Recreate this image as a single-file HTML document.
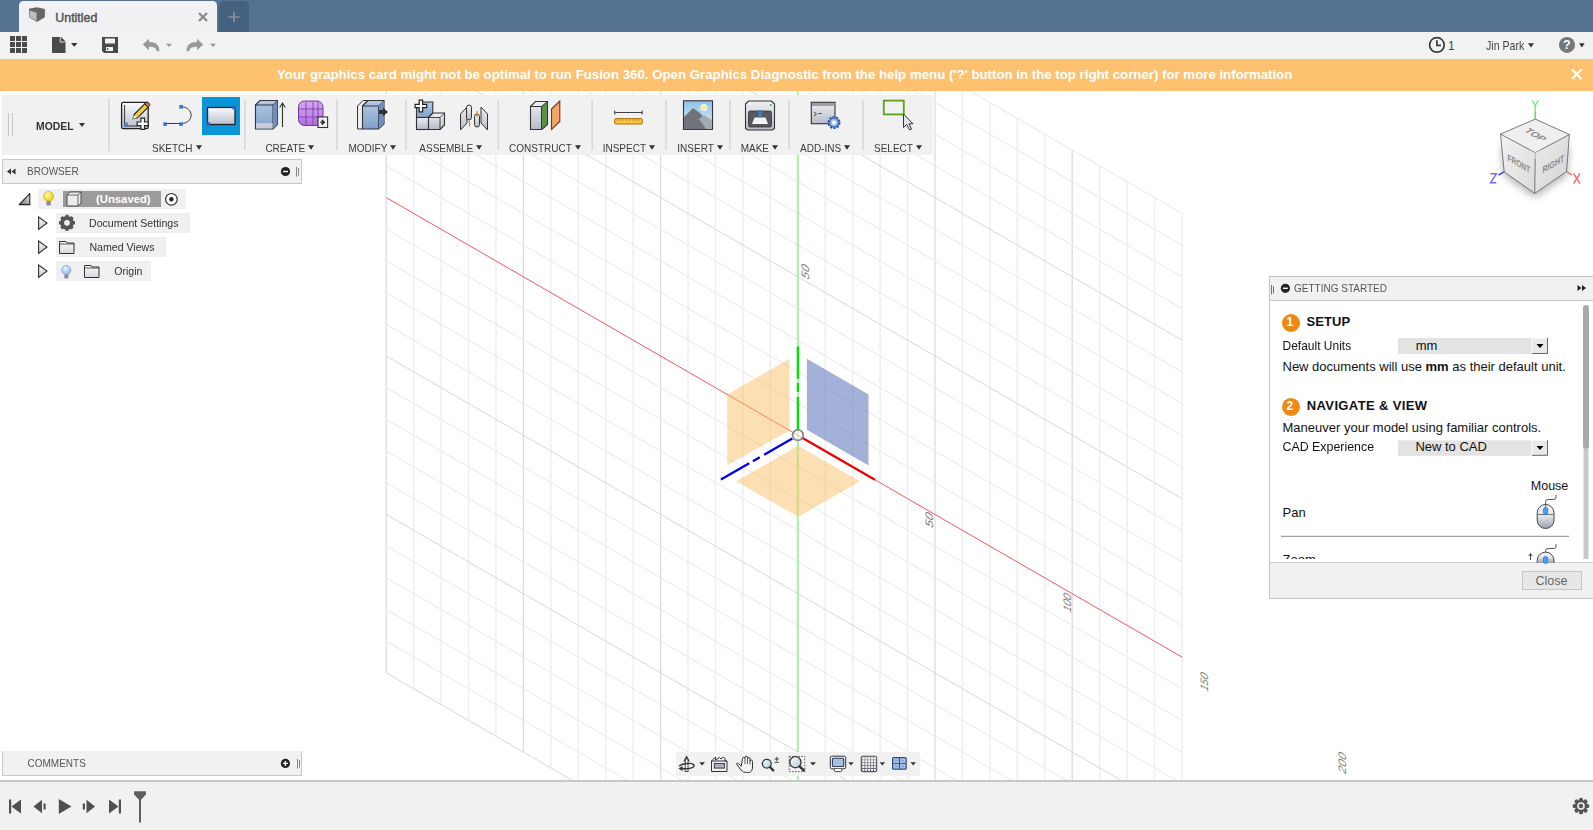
<!DOCTYPE html>
<html><head><meta charset="utf-8">
<style>
*{box-sizing:border-box;margin:0;padding:0}
html,body{width:1593px;height:830px;overflow:hidden;background:#fff;font-family:"Liberation Sans",sans-serif;position:relative}
.abs{position:absolute}
#tabbar{left:0;top:0;width:1593px;height:32px;background:#557391}
#tab{left:19px;top:1px;width:198px;height:31px;background:#f1f1f3;border-radius:4.5px 4.5px 0 0}
#tabplus{left:219px;top:1px;width:30px;height:31px;background:#45617f;border-radius:5px 5px 0 0}
#qbar{left:0;top:32px;width:1593px;height:27px;background:#f2f2f2}
#banner{left:0;top:59px;width:1593px;height:32px;background:#fdc16f;color:#fff;font-weight:bold;font-size:13.25px;line-height:32px;white-space:nowrap}
#view{left:0;top:91px;width:1593px;height:689px;overflow:hidden;background:#fff}
#timeline{left:0;top:780px;width:1593px;height:50px;background:#f1f1f1;border-top:2px solid #c8c8c8}
.tb{background:#f1f1f1}
.sep{position:absolute;width:2px;background:#dcdcdc;top:5px;height:52px}
.lbl{position:absolute;top:48px;font-size:10px;color:#3c3c3c;white-space:nowrap;line-height:12px}
.tri{display:inline-block;width:0;height:0;border-left:3px solid transparent;border-right:3px solid transparent;border-top:4px solid #333;vertical-align:2px;margin-left:3px}
.lbl2{position:absolute;top:0;font-size:10px;color:#3a3a3a;white-space:nowrap;line-height:14px;transform:scaleY(1.08);transform-origin:0 0}
.lbl2 .tri{border-top-color:#333}
.tree{font-size:10.6px;color:#333;line-height:14px;margin-top:-1px;white-space:nowrap;transform:scaleY(1.1);transform-origin:0 0}
.gs{font-size:13px;color:#111;line-height:15px;white-space:nowrap}
</style></head><body>

<div id="tabbar" class="abs"></div>
<div id="tab" class="abs"></div>
<div id="tabplus" class="abs"></div>
<svg class="abs" style="left:0;top:0" width="260" height="32">
 <path d="M29,8.8 L36.9,7.2 L44.9,9.1 L44.9,17.3 L36.9,22 L29.2,17.3 Z" fill="#666"/>
 <path d="M29.6,10.4 L36.6,12.8 L36.6,21 L29.6,16.9 Z" fill="#bdbdbd"/>
 <path d="M199,13 L207,21 M207,13 L199,21" stroke="#8a8a8a" stroke-width="2.3"/>
 <path d="M234,11.5 V22.5 M228.5,17 H239.5" stroke="#8e9098" stroke-width="1.6"/>
</svg>
<div class="abs" style="left:55.3px;top:10.6px;font-size:12.4px;color:#555;line-height:15px;-webkit-text-stroke:0.45px #555">Untitled</div>
<div id="qbar" class="abs"></div>
<svg class="abs" style="left:0;top:32px" width="240" height="27">
 <g fill="#4a4a4a">
  <rect x="10" y="4" width="5" height="5"/><rect x="16" y="4" width="5" height="5"/><rect x="22" y="4" width="5" height="5"/>
  <rect x="10" y="10" width="5" height="5"/><rect x="16" y="10" width="5" height="5"/><rect x="22" y="10" width="5" height="5"/>
  <rect x="10" y="16" width="5" height="5"/><rect x="16" y="16" width="5" height="5"/><rect x="22" y="16" width="5" height="5"/>
 </g>
 <path d="M52,5 H60 L65.5,10.5 V21 H52 Z" fill="#4a4a4a"/><path d="M60.8,4.8 L65.8,9.8 H60.8 Z" fill="#4a4a4a"/><path d="M60.2,5.6 V10 H64.8" fill="none" stroke="#f2f2f2" stroke-width="0.9"/>
 <path d="M71,11 H77.5 L74.25,14.8 Z" fill="#333"/>
 <path d="M102,5 H118 V21 H104 L102,19 Z" fill="#4a4a4a"/>
 <rect x="105" y="6.5" width="10" height="5" fill="#f2f2f2"/>
 <rect x="106" y="15" width="7" height="4" fill="#f2f2f2"/><rect x="107" y="16" width="1.2" height="2" fill="#4a4a4a"/>
 <path d="M142.8,12.5 L149,6.8 V10 C155.5,9.8 159.6,12.5 159.3,19.2 L156.8,19.2 C156.3,16 153.5,14.8 149,14.8 V18.2 Z" fill="#999"/>
 <path d="M166,11.8 H172 L169,15 Z" fill="#999"/>
 <path d="M203.2,12.5 L197,6.8 V10 C190.5,9.8 186.4,12.5 186.7,19.2 L189.2,19.2 C189.7,16 192.5,14.8 197,14.8 V18.2 Z" fill="#999"/>
 <path d="M210,11.8 H216 L213,15 Z" fill="#999"/>
</svg>
<svg class="abs" style="left:1420px;top:32px" width="173" height="27">
 <circle cx="16.9" cy="12.9" r="7.3" fill="none" stroke="#3a3a3a" stroke-width="1.7"/>
 <path d="M16.9,8.3 V13.4 H21" fill="none" stroke="#3a3a3a" stroke-width="1.7"/>
 <path d="M108,11.2 H114 L111,15.5 Z" fill="#333"/>
 <circle cx="147" cy="12.9" r="8" fill="#777"/>
 <path d="M159,11.2 H164.7 L161.85,15.5 Z" fill="#333"/>
</svg>
<div class="abs" style="left:1448px;top:39px;font-size:12px;color:#444;line-height:14px">1</div>
<div class="abs" style="left:1486px;top:37px;font-size:10.6px;color:#444;line-height:14px;transform:scaleY(1.15);transform-origin:0 0">Jin Park</div>
<div class="abs" style="left:1563px;top:38px;font-size:12.5px;font-weight:bold;color:#fff;line-height:15px">?</div>
<div id="banner" class="abs"><span class="abs" style="left:277px;top:0">Your graphics card might not be optimal to run Fusion 360. Open Graphics Diagnostic from the help menu ('?' button in the top right corner) for more information</span>
<svg class="abs" style="left:1570px;top:9px" width="14" height="14"><path d="M2,1.5 L11.5,11 M11.5,1.5 L2,11" stroke="#fff" stroke-width="2.2"/></svg></div>
<div id="view" class="abs">
<svg class="abs" style="left:0;top:-91px" width="1593" height="871" viewBox="0 0 1593 871">
<g stroke-width="1">
<line x1="386.20" y1="-246.03" x2="386.20" y2="672.84" stroke="#dcdcdc" stroke-width="1.3"/>
<line x1="413.64" y1="-230.18" x2="413.64" y2="688.68" stroke="#efefef" stroke-width="1.5"/>
<line x1="441.08" y1="-214.34" x2="441.08" y2="704.52" stroke="#efefef" stroke-width="1.5"/>
<line x1="468.52" y1="-198.50" x2="468.52" y2="720.36" stroke="#efefef" stroke-width="1.5"/>
<line x1="495.96" y1="-182.66" x2="495.96" y2="736.21" stroke="#efefef" stroke-width="1.5"/>
<line x1="523.40" y1="-166.81" x2="523.40" y2="752.05" stroke="#dcdcdc" stroke-width="1.3"/>
<line x1="550.84" y1="-150.97" x2="550.84" y2="767.89" stroke="#efefef" stroke-width="1.5"/>
<line x1="578.28" y1="-135.13" x2="578.28" y2="783.73" stroke="#efefef" stroke-width="1.5"/>
<line x1="605.72" y1="-119.29" x2="605.72" y2="799.58" stroke="#efefef" stroke-width="1.5"/>
<line x1="633.16" y1="-103.44" x2="633.16" y2="815.42" stroke="#efefef" stroke-width="1.5"/>
<line x1="660.60" y1="-87.60" x2="660.60" y2="831.26" stroke="#dcdcdc" stroke-width="1.3"/>
<line x1="688.04" y1="-71.76" x2="688.04" y2="847.10" stroke="#efefef" stroke-width="1.5"/>
<line x1="715.48" y1="-55.92" x2="715.48" y2="862.95" stroke="#efefef" stroke-width="1.5"/>
<line x1="742.92" y1="-40.07" x2="742.92" y2="878.79" stroke="#efefef" stroke-width="1.5"/>
<line x1="770.36" y1="-24.23" x2="770.36" y2="894.63" stroke="#efefef" stroke-width="1.5"/>
<line x1="825.24" y1="7.45" x2="825.24" y2="926.32" stroke="#efefef" stroke-width="1.5"/>
<line x1="852.68" y1="23.30" x2="852.68" y2="942.16" stroke="#efefef" stroke-width="1.5"/>
<line x1="880.12" y1="39.14" x2="880.12" y2="958.00" stroke="#efefef" stroke-width="1.5"/>
<line x1="907.56" y1="54.98" x2="907.56" y2="973.84" stroke="#efefef" stroke-width="1.5"/>
<line x1="935.00" y1="70.82" x2="935.00" y2="989.69" stroke="#dcdcdc" stroke-width="1.3"/>
<line x1="962.44" y1="86.67" x2="962.44" y2="1005.53" stroke="#efefef" stroke-width="1.5"/>
<line x1="989.88" y1="102.51" x2="989.88" y2="1021.37" stroke="#efefef" stroke-width="1.5"/>
<line x1="1017.32" y1="118.35" x2="1017.32" y2="1037.21" stroke="#efefef" stroke-width="1.5"/>
<line x1="1044.76" y1="134.19" x2="1044.76" y2="1053.06" stroke="#efefef" stroke-width="1.5"/>
<line x1="1072.20" y1="150.04" x2="1072.20" y2="1068.90" stroke="#dcdcdc" stroke-width="1.3"/>
<line x1="1099.64" y1="165.88" x2="1099.64" y2="1084.74" stroke="#efefef" stroke-width="1.5"/>
<line x1="1127.08" y1="181.72" x2="1127.08" y2="1100.58" stroke="#efefef" stroke-width="1.5"/>
<line x1="1154.52" y1="197.56" x2="1154.52" y2="1116.43" stroke="#efefef" stroke-width="1.5"/>
<line x1="1181.96" y1="213.41" x2="1181.96" y2="1132.27" stroke="#efefef" stroke-width="1.5"/>
<line x1="386.20" y1="-246.03" x2="1181.96" y2="213.41" stroke="#e8e8e8"/>
<line x1="386.20" y1="-214.34" x2="1181.96" y2="245.09" stroke="#e8e8e8"/>
<line x1="386.20" y1="-182.66" x2="1181.96" y2="276.78" stroke="#e8e8e8"/>
<line x1="386.20" y1="-150.97" x2="1181.96" y2="308.46" stroke="#e8e8e8"/>
<line x1="386.20" y1="-119.29" x2="1181.96" y2="340.15" stroke="#d8d8d8"/>
<line x1="386.20" y1="-87.60" x2="1181.96" y2="371.83" stroke="#e8e8e8"/>
<line x1="386.20" y1="-55.92" x2="1181.96" y2="403.52" stroke="#e8e8e8"/>
<line x1="386.20" y1="-24.23" x2="1181.96" y2="435.20" stroke="#e8e8e8"/>
<line x1="386.20" y1="7.45" x2="1181.96" y2="466.88" stroke="#e8e8e8"/>
<line x1="386.20" y1="39.14" x2="1181.96" y2="498.57" stroke="#d8d8d8"/>
<line x1="386.20" y1="70.82" x2="1181.96" y2="530.25" stroke="#e8e8e8"/>
<line x1="386.20" y1="102.51" x2="1181.96" y2="561.94" stroke="#e8e8e8"/>
<line x1="386.20" y1="134.19" x2="1181.96" y2="593.62" stroke="#e8e8e8"/>
<line x1="386.20" y1="165.88" x2="1181.96" y2="625.31" stroke="#e8e8e8"/>
<line x1="386.20" y1="229.25" x2="1181.96" y2="688.68" stroke="#e8e8e8"/>
<line x1="386.20" y1="260.93" x2="1181.96" y2="720.36" stroke="#e8e8e8"/>
<line x1="386.20" y1="292.62" x2="1181.96" y2="752.05" stroke="#e8e8e8"/>
<line x1="386.20" y1="324.30" x2="1181.96" y2="783.73" stroke="#e8e8e8"/>
<line x1="386.20" y1="355.99" x2="1181.96" y2="815.42" stroke="#d8d8d8"/>
<line x1="386.20" y1="387.67" x2="1181.96" y2="847.10" stroke="#e8e8e8"/>
<line x1="386.20" y1="419.36" x2="1181.96" y2="878.79" stroke="#e8e8e8"/>
<line x1="386.20" y1="451.04" x2="1181.96" y2="910.47" stroke="#e8e8e8"/>
<line x1="386.20" y1="482.73" x2="1181.96" y2="942.16" stroke="#e8e8e8"/>
<line x1="386.20" y1="514.41" x2="1181.96" y2="973.84" stroke="#d8d8d8"/>
<line x1="386.20" y1="546.10" x2="1181.96" y2="1005.53" stroke="#e8e8e8"/>
<line x1="386.20" y1="577.78" x2="1181.96" y2="1037.21" stroke="#e8e8e8"/>
<line x1="386.20" y1="609.47" x2="1181.96" y2="1068.90" stroke="#e8e8e8"/>
<line x1="386.20" y1="641.15" x2="1181.96" y2="1100.58" stroke="#e8e8e8"/>
<line x1="386.20" y1="672.84" x2="1181.96" y2="1132.27" stroke="#d8d8d8"/>


</g>
<g>
 <line x1="797.8" y1="0" x2="797.8" y2="871" stroke="#a6f29e" stroke-width="2"/>
 <line x1="386.4" y1="197.7" x2="1182.4" y2="657.3" stroke="#f25a5a" stroke-width="1"/>
 <path d="M789.5,358.8 L727.2,394.5 V465.5 L789.5,430.5 Z" fill="#f9bf60" fill-opacity="0.48"/>
 <path d="M806.9,358.8 L868.5,394.5 V465.5 L806.9,429.8 Z" fill="#6077bb" fill-opacity="0.58"/>
 <path d="M798.2,445.8 L735.9,481.3 L798.2,516.8 L860,481.3 Z" fill="#f9bf60" fill-opacity="0.48"/>
 <line x1="797.9" y1="346.4" x2="797.9" y2="429.5" stroke="#00e000" stroke-width="2.3" stroke-dasharray="32.3 4.4 8.9 5 40"/>
 <line x1="802.6" y1="438" x2="874.9" y2="479.7" stroke="#f00000" stroke-width="2.3"/>
 <line x1="792.4" y1="438.5" x2="720.9" y2="479.6" stroke="#0000ee" stroke-width="2.3" stroke-dasharray="32.6 5 8 4.2 40"/>
 <circle cx="797.9" cy="435.1" r="5.3" fill="#fff" fill-opacity="0.5" stroke="#8a8a8a" stroke-width="1.8"/>
 <g font-family="Liberation Sans" font-size="12.5" fill="#7a7a7a">
  <text transform="matrix(0,-1,0.866,0.5,809.2,280.6)" textLength="14" lengthAdjust="spacingAndGlyphs">50</text>
  <text transform="matrix(0,-1,0.866,0.5,933.1,529)" textLength="14.6" lengthAdjust="spacingAndGlyphs">50</text>
  <text transform="matrix(0,-1,0.866,0.5,1070.5,613.5)" textLength="17.9" lengthAdjust="spacingAndGlyphs">100</text>
  <text transform="matrix(0,-1,0.866,0.5,1208.2,692.6)" textLength="17.9" lengthAdjust="spacingAndGlyphs">150</text>
  <text transform="matrix(0,-1,0.866,0.5,1345.5,775)" textLength="20.5" lengthAdjust="spacingAndGlyphs">200</text>
 </g>
</g>
</svg>
</div>

<div id="toolbar" class="abs" style="left:2px;top:95px;width:931px;height:60px;background:#f1f1f1"></div>
<svg class="abs" style="left:0;top:90px" width="940" height="70">
 <defs>
  <linearGradient id="gPaper" x1="0" y1="0" x2="0" y2="1"><stop offset="0" stop-color="#fbfcfe"/><stop offset="1" stop-color="#b9bfcc"/></linearGradient>
  <linearGradient id="gBlue" x1="0" y1="0" x2="0" y2="1"><stop offset="0" stop-color="#b5cbe6"/><stop offset="1" stop-color="#7f9fcb"/></linearGradient>
  <linearGradient id="gGray" x1="0" y1="0" x2="0" y2="1"><stop offset="0" stop-color="#eef0f4"/><stop offset="1" stop-color="#b6bcc8"/></linearGradient>
  <linearGradient id="gSky" x1="0" y1="0" x2="0" y2="1"><stop offset="0" stop-color="#8fc0e8"/><stop offset="1" stop-color="#e6f2fb"/></linearGradient>
  <linearGradient id="gPurple" x1="0" y1="0" x2="0" y2="1"><stop offset="0" stop-color="#d9a8f2"/><stop offset="1" stop-color="#b56ee0"/></linearGradient>
 </defs>
 <!-- grip -->
 <path d="M8.5,23 V46 M12.5,23 V46" stroke="#c6c6c6" stroke-width="1"/>
 <path d="M79,33 H85 L82,37 Z" fill="#333"/>
 <!-- separators -->
 <g stroke="#d8d8d8" stroke-width="1.6">
  <path d="M109,8 V61"/><path d="M244.8,10 V60"/><path d="M336.8,10 V60"/><path d="M405.9,10 V60"/><path d="M498.3,10 V60"/>
  <path d="M592.2,10 V60"/><path d="M666,10 V60"/><path d="M729.8,10 V60"/><path d="M789.2,10 V60"/><path d="M862.9,10 V60"/>
 </g>
 <!-- sketch create -->
 <rect x="121.6" y="12.3" width="26.6" height="26.4" rx="1.6" fill="url(#gPaper)" stroke="#222" stroke-width="1.3"/>
 <path d="M124.6,15 V36 H137" fill="none" stroke="#333" stroke-width="1"/>
 <rect x="124.6" y="33" width="3" height="3" fill="#5c9cf0" stroke="#2a5cc0" stroke-width="0.6"/>
 <path d="M134.2,24.5 L144.8,13.9 L148.1,17.2 L137.5,27.8 L133.2,28.8 Z" fill="#f8cf2e" stroke="#222" stroke-width="1.1"/>
 <path d="M133.9,25.2 L136.8,28.1 L133.2,28.8 Z" fill="#fff"/>
 <path d="M144.8,13.9 L146.3,12.4 Q147.2,11.6 148.1,12.4 L149.6,13.9 Q150.4,14.8 149.6,15.7 L148.1,17.2 Z" fill="#c97a3a" stroke="#222" stroke-width="0.9"/>
 <path d="M140.9,28.2 h3.6 v3.8 h3.8 v3.6 h-3.8 v3.8 h-3.6 v-3.8 h-3.8 v-3.6 h3.8 Z" fill="#fff" stroke="#222" stroke-width="1.2"/>
 <!-- line arc -->
 <path d="M165,33.5 H181 M181,16.8 C194.5,16.8 194.5,33.5 181,33.5" fill="none" stroke="#3a3a3a" stroke-width="1"/>
 <rect x="163.3" y="32.3" width="3.6" height="3.6" fill="#3b6fd8"/><rect x="179.3" y="32.3" width="3.6" height="3.6" fill="#3b6fd8"/><rect x="179.3" y="15" width="3.6" height="3.6" fill="#3b6fd8"/>
 <!-- rectangle selected -->
 <rect x="202" y="7" width="38" height="38" fill="#0996d6"/>
 <rect x="207.5" y="17.5" width="27.5" height="17" fill="url(#gPaper)" stroke="#222" stroke-width="1.3"/>
 <rect x="232.5" y="16" width="3.6" height="3.6" fill="#2f5fd6"/><rect x="206.5" y="32.3" width="3.6" height="3.6" fill="#2f5fd6"/>
 <!-- extrude -->
 <path d="M255.5,15 L260,10.5 H277.5 V34.5 L273,39 H255.5 Z" fill="url(#gBlue)" stroke="#333" stroke-width="1.1"/>
 <path d="M255.5,15 H273 L277.5,10.5 M273,15 V39" fill="none" stroke="#333" stroke-width="1"/>
 <path d="M273.2,15.2 L277.3,11 V34.5 L273.2,38.8 Z" fill="#6f8fbf"/>
 <rect x="256" y="33" width="16.6" height="5.5" fill="#c7ccd6"/>
 <path d="M282.5,37 V14 M279.7,17.5 L282.5,13 L285.3,17.5" fill="none" stroke="#333" stroke-width="1.1"/>
 <!-- form -->
 <rect x="298.5" y="11" width="24.5" height="24.5" rx="6" fill="url(#gPurple)" stroke="#6b3a9a" stroke-width="1"/>
 <g stroke="#7a44a8" stroke-width="0.9" fill="none"><path d="M299,19 H323 M299,27 H323 M306,12 V35 M313,12 V35 M318,12 V35"/></g>
 <rect x="318" y="27" width="9.6" height="10.5" fill="#f4f4f4" stroke="#333" stroke-width="1.1"/>
 <path d="M320,32.3 H323.5 M322,29.8 L325,32.3 L322,34.8 Z" fill="#333" stroke="#333" stroke-width="1"/>
 <!-- modify press pull -->
 <path d="M357.5,16 L363,10.5 H368 L362.5,16 V39 H357.5 Z" fill="#eceef2" stroke="#333" stroke-width="1"/>
 <path d="M362.5,16 L368,10.5 H384 V34 L378.5,39 H362.5 Z" fill="url(#gBlue)" stroke="#333" stroke-width="1.1"/>
 <path d="M362.5,16 H378.5 L384,10.5 M378.5,16 V39" fill="none" stroke="#333" stroke-width="1"/>
 <path d="M378.7,16.2 L383.8,11 V34 L378.7,38.8 Z" fill="#6f8fbf"/>
 <path d="M379,20 H383 V17.5 L388,22 L383,26.5 V24 H379 Z" fill="#333"/>
 <!-- assemble new comp -->
 <path d="M416.5,17.5 L421,12 H432.8 V23 L428.5,27.5 H416.5 Z" fill="url(#gBlue)" stroke="#333" stroke-width="1.1"/>
 <rect x="416.5" y="27.5" width="12" height="12" fill="url(#gGray)" stroke="#333" stroke-width="1.1"/>
 <path d="M428.5,27.5 L433,23 H444.5 V35 L440,39.5 H428.5 Z" fill="url(#gGray)" stroke="#333" stroke-width="1.1"/>
 <path d="M428.5,27.5 H440 L444.5,23 M440,27.5 V39.5" fill="none" stroke="#333" stroke-width="0.9"/>
 <path d="M419.2,10.2 h3.4 v4.1 h4.1 v3.4 h-4.1 v4.1 h-3.4 v-4.1 h-4.1 v-3.4 h4.1 Z" fill="#fff" stroke="#222" stroke-width="1.2"/>
 <!-- joint -->
 <path d="M460.5,24 L467,17 V33 L460.5,40 Z" fill="url(#gGray)" stroke="#333" stroke-width="1"/>
 <rect x="466.5" y="15" width="5" height="15" rx="2.5" fill="url(#gGray)" stroke="#333" stroke-width="1"/>
 <path d="M487.5,24 L481,17 V33 L487.5,40 Z" fill="url(#gGray)" stroke="#333" stroke-width="1"/>
 <rect x="474.5" y="24" width="5" height="13" rx="2.5" fill="url(#gGray)" stroke="#333" stroke-width="1"/>
 <path d="M469.5,31 V36.5 M477,21 V27" stroke="#f07a10" stroke-width="1.2"/>
 <!-- construct -->
 <path d="M530.5,16.5 L535.5,11.5 H547.5 V34.5 L541.5,39.5 H530.5 Z" fill="url(#gGray)" stroke="#333" stroke-width="1.1"/>
 <path d="M541.5,16.5 L547.5,11.5 V34.5 L541.5,39.5 Z" fill="#5c8f47" stroke="#333" stroke-width="1"/>
 <path d="M530.5,16.5 H541.5" stroke="#333" stroke-width="1"/>
 <path d="M551.5,19 L559.8,11 V31.5 L551.5,39.5 Z" fill="#f0a56a" stroke="#7a3a10" stroke-width="1.1"/>
 <!-- inspect -->
 <path d="M614.7,20.5 V24.5 M614.7,22.5 H642.2 M642.2,20.5 V24.5" fill="none" stroke="#444" stroke-width="1.1"/>
 <rect x="614.7" y="28.6" width="27.6" height="5.4" rx="1" fill="#f3c640" stroke="#b07010" stroke-width="1"/>
 <path d="M617.5,29 v2 M620.5,29 v2 M623.5,29 v2 M626.5,29 v2 M629.5,29 v2 M632.5,29 v2 M635.5,29 v2 M638.5,29 v2" stroke="#a06a10" stroke-width="0.6"/>
 <!-- insert -->
 <rect x="683.5" y="10.8" width="29" height="28.6" fill="url(#gSky)" stroke="#333" stroke-width="1.1"/>
 <circle cx="703.9" cy="17.5" r="3.2" fill="#f8ec9a" stroke="#fff" stroke-width="0.8"/>
 <path d="M684,39 V27 L693,18 L700,23 L712,36 V39 Z" fill="#6f747c"/>
 <path d="M699,29 L704,25 L712,30 V39 H706 Z" fill="#a3aab3"/>
 <!-- make -->
 <path d="M745.5,14 L748.5,11 H771.5 L774.5,14 V38.5 L772.5,40 H747.5 L745.5,38.5 Z" fill="url(#gGray)" stroke="#333" stroke-width="1.1"/>
 <rect x="748.5" y="21" width="23" height="16" rx="1.5" fill="#55595f" stroke="#333" stroke-width="0.8"/>
 <path d="M752,34 L754.5,27.5 H765.5 L768,34 Z" fill="#f2f2f2"/>
 <path d="M758.5,20 H761.5 V26 L760,28 L758.5,26 Z" fill="#3f7fd8"/>
 <rect x="770" y="14.2" width="1.6" height="1.6" fill="#1aa31a"/>
 <!-- add-ins -->
 <rect x="811.3" y="12.3" width="23.7" height="21.4" fill="url(#gGray)" stroke="#333" stroke-width="1.1"/>
 <rect x="812" y="13" width="22.4" height="3" fill="#9aa0aa"/>
 <path d="M814,22 L816.5,24 L814,26 M818.5,23.5 H821.5" fill="none" stroke="#333" stroke-width="0.9"/>
 <g transform="translate(834,32.6)"><circle r="5.8" fill="#8fb1e4" stroke="#2a4f9a" stroke-width="1.4" stroke-dasharray="2.2 1.4"/><circle r="4.5" fill="#9dbbe8" stroke="#2a4f9a" stroke-width="1"/><circle r="2" fill="#fff"/></g>
 <!-- select -->
 <rect x="883.8" y="10.6" width="20" height="13.8" fill="none" stroke="#5ea01a" stroke-width="1.8"/>
 <path d="M903.5,24 V37.5 L906.6,34.5 L909.6,40 L911.6,39 L908.9,33.8 L913,33.8 Z" fill="#dfe3ea" stroke="#333" stroke-width="1"/>
</svg>
<div class="abs" style="left:36px;top:119px;font-size:10.4px;font-weight:bold;color:#333;line-height:14px;transform:scaleY(1.12);transform-origin:0 0">MODEL</div>
<div class="abs lblrow" style="left:0;top:141px;width:940px;height:16px">
 <span class="lbl2" style="left:152px">SKETCH<i class="tri"></i></span>
 <span class="lbl2" style="left:265.4px">CREATE<i class="tri"></i></span>
 <span class="lbl2" style="left:348.5px">MODIFY<i class="tri"></i></span>
 <span class="lbl2" style="left:419.3px">ASSEMBLE<i class="tri"></i></span>
 <span class="lbl2" style="left:509px">CONSTRUCT<i class="tri"></i></span>
 <span class="lbl2" style="left:602.7px">INSPECT<i class="tri"></i></span>
 <span class="lbl2" style="left:677.3px">INSERT<i class="tri"></i></span>
 <span class="lbl2" style="left:740.7px">MAKE<i class="tri"></i></span>
 <span class="lbl2" style="left:800px">ADD-INS<i class="tri"></i></span>
 <span class="lbl2" style="left:874px">SELECT<i class="tri"></i></span>
</div>


<!-- browser -->
<div class="abs" style="left:2px;top:159px;width:300px;height:25px;background:#f1f1f1;border:1px solid #c9c9c9"></div>
<svg class="abs" style="left:0;top:159px" width="310" height="25">
 <path d="M7,12.5 L11,9.5 V15.5 Z M11.5,12.5 L15.5,9.5 V15.5 Z" fill="#333"/>
 <circle cx="285.5" cy="12.5" r="4.6" fill="#222"/><path d="M283,12.5 H288" stroke="#fff" stroke-width="1.4"/>
 <path d="M296.5,8 V17.5 M298.5,9 V16.5" stroke="#777" stroke-width="0.9"/>
</svg>
<div class="abs" style="left:27px;top:164px;font-size:10px;color:#555;line-height:14px;transform:scaleY(1.08);transform-origin:0 0">BROWSER</div>
<!-- tree -->
<div class="abs" style="left:38px;top:189px;width:148px;height:20px;background:#f0f0f0"></div>
<div class="abs" style="left:63px;top:191px;width:98px;height:16px;background:#9b9b9b"></div>
<div class="abs" style="left:56px;top:213px;width:134px;height:20px;background:#f0f0f0"></div>
<div class="abs" style="left:56px;top:237px;width:110px;height:20px;background:#f0f0f0"></div>
<div class="abs" style="left:56px;top:261px;width:95px;height:20px;background:#f0f0f0"></div>
<svg class="abs" style="left:0;top:185px" width="200" height="100">
 <defs>
  <radialGradient id="gBulbY" cx="0.4" cy="0.35" r="0.7"><stop offset="0" stop-color="#fff9b0"/><stop offset="1" stop-color="#e8c800"/></radialGradient>
  <radialGradient id="gBulbB" cx="0.4" cy="0.35" r="0.7"><stop offset="0" stop-color="#e8f2ff"/><stop offset="1" stop-color="#8ab0e8"/></radialGradient>
  <linearGradient id="gFold" x1="0" y1="0" x2="0" y2="1"><stop offset="0" stop-color="#fafafa"/><stop offset="1" stop-color="#d6d9de"/></linearGradient>
 </defs>
 <defs><linearGradient id="gExp" x1="1" y1="0" x2="0" y2="1"><stop offset="0" stop-color="#f4f4f4"/><stop offset="1" stop-color="#6a6a6a"/></linearGradient></defs>
 <path d="M19.2,19.6 L29.8,8.6 V19.6 Z" fill="url(#gExp)" stroke="#222" stroke-width="1.1" stroke-linejoin="round"/>
 <circle cx="48.6" cy="11.4" r="5" fill="url(#gBulbY)" stroke="#c9a800" stroke-width="0.6"/>
 <rect x="46.3" y="16" width="4.6" height="4.6" rx="1" fill="#8a8f99"/>
 <path d="M67,10 L70,7 H81 V18 L78,21 H67 Z" fill="#e9ebee" stroke="#444" stroke-width="0.9"/>
 <path d="M67,10 H78 L81,7 M78,10 V21" fill="none" stroke="#444" stroke-width="0.8"/>
 <circle cx="171.4" cy="14.3" r="5.8" fill="#fff" stroke="#333" stroke-width="1.2"/><circle cx="171.4" cy="14.3" r="2.2" fill="#222"/>
 <!-- row arrows -->
 <defs><linearGradient id="gArr" x1="0" y1="0" x2="0" y2="1"><stop offset="0" stop-color="#fdfdfd"/><stop offset="1" stop-color="#c4c4c4"/></linearGradient></defs><g fill="url(#gArr)" stroke="#333" stroke-width="1.1"><path d="M38.6,32 L47,38 L38.6,44.5 Z"/><path d="M38.6,56 L47,62 L38.6,68.5 Z"/><path d="M38.6,80 L47,86 L38.6,92.5 Z"/></g>
 <!-- gear -->
 <g transform="translate(67,37.8)">
  <circle r="5.2" fill="none" stroke="#555" stroke-width="3.4"/>
  <g fill="#555"><rect x="-1.6" y="-8" width="3.2" height="16"/><rect x="-1.6" y="-8" width="3.2" height="16" transform="rotate(45)"/><rect x="-1.6" y="-8" width="3.2" height="16" transform="rotate(90)"/><rect x="-1.6" y="-8" width="3.2" height="16" transform="rotate(135)"/></g>
  <circle r="2.9" fill="#f0f0f0"/>
 </g>
 <!-- folders -->
 <path d="M59.5,68.5 V56.5 H66 L67,58 H74 V68.5 Z" fill="url(#gFold)" stroke="#333" stroke-width="1"/><path d="M59.5,59 H74" stroke="#333" stroke-width="0.8"/>
 <circle cx="66.3" cy="85" r="4.6" fill="url(#gBulbB)" stroke="#6f95cf" stroke-width="0.6"/>
 <rect x="64.2" y="89.2" width="4.3" height="4.2" rx="1" fill="#8a8f99"/>
 <path d="M84.5,92.5 V80.5 H91 L92,82 H99 V92.5 Z" fill="url(#gFold)" stroke="#333" stroke-width="1"/><path d="M84.5,83 H99" stroke="#333" stroke-width="0.8"/>
</svg>
<div class="abs" style="left:96px;top:192px;font-size:11.3px;font-weight:bold;color:#fff;line-height:14px">(Unsaved)</div>
<div class="abs tree" style="left:89px;top:216px">Document Settings</div>
<div class="abs tree" style="left:89.4px;top:240px">Named Views</div>
<div class="abs tree" style="left:114.2px;top:264px">Origin</div>


<!-- viewcube -->
<svg class="abs" style="left:1480px;top:95px" width="113" height="115">
 <defs>
  <radialGradient id="gShadow" cx="0.5" cy="0.5" r="0.5"><stop offset="0" stop-color="#000" stop-opacity="0.28"/><stop offset="1" stop-color="#000" stop-opacity="0"/></radialGradient>
  <linearGradient id="gFaceL" x1="0" y1="0" x2="1" y2="1"><stop offset="0" stop-color="#f2f2f2"/><stop offset="1" stop-color="#dadada"/></linearGradient>
  <linearGradient id="gFaceR" x1="0" y1="0" x2="1" y2="1"><stop offset="0" stop-color="#ededed"/><stop offset="1" stop-color="#d2d2d2"/></linearGradient>
 </defs>
 <filter id="fBlur" x="-50%" y="-50%" width="200%" height="200%"><feGaussianBlur stdDeviation="4"/></filter>
 <path d="M55.3,40 L22,52 L24.2,80 L54.7,102 L86.5,80 L88.5,52 Z" fill="#000" opacity="0.32" filter="url(#fBlur)"/>
 <path d="M55.3,24.1 L20.5,39.1 L55.3,57.7 L89.4,39.5 Z" fill="#efefef"/>
 <path d="M20.5,39.1 L55.3,57.7 L54.7,98.4 L24.2,76.9 Z" fill="url(#gFaceL)"/>
 <path d="M89.4,39.5 L55.3,57.7 L54.7,98.4 L86.5,76.6 Z" fill="url(#gFaceR)"/>
 <path d="M55.3,24.1 L20.5,39.1 L24.2,76.9 L54.7,98.4 L86.5,76.6 L89.4,39.5 Z M20.5,39.1 L55.3,57.7 L89.4,39.5 M55.3,57.7 L54.7,98.4" fill="none" stroke="#666" stroke-width="0.85"/>
 <path d="M55.3,57.7 L61,54.5 L61,60.5 L55.3,64 L49.5,60.5 L49.5,54.5 Z" fill="#dde3ea" opacity="0.6"/>
 <g font-family="Liberation Sans" font-weight="bold" font-size="9.5" fill="#8a8a8a">
  <text transform="matrix(0.866,0.5,-0.866,0.5,43.7,36.1)" textLength="21" lengthAdjust="spacingAndGlyphs">TOP</text>
  <text transform="matrix(0.866,0.5,0,1,27.5,65.5)" textLength="26" lengthAdjust="spacingAndGlyphs">FRONT</text>
  <text transform="matrix(0.866,-0.5,0,1,62.6,78.5)" textLength="25" lengthAdjust="spacingAndGlyphs">RIGHT</text>
 </g>
 <path d="M55.3,16.5 V24" stroke="#55e055" stroke-width="1.6"/>
 <path d="M52.3,5.5 L55.3,10.5 L58.3,5.5 M55.3,10.5 V16.5" fill="none" stroke="#66ee66" stroke-width="1.3"/>
 <path d="M24.2,76.9 L18.5,80" stroke="#4a4ae0" stroke-width="1.6"/>
 <path d="M10.5,78.8 H16.4 L10.5,87.8 H16.4" fill="none" stroke="#6b6bff" stroke-width="1.4"/>
 <path d="M86.5,76.6 L92,80" stroke="#e58080" stroke-width="1.6"/>
 <path d="M93.5,78.5 L100,88.5 M100,78.5 L93.5,88.5" fill="none" stroke="#ff6b6b" stroke-width="1.4"/>
</svg>
<!-- getting started -->
<div class="abs" style="left:1269px;top:276px;width:330px;height:323px;background:#fff;border:1px solid #c3c3c3"></div>
<div class="abs" style="left:1270px;top:277px;width:323px;height:24px;background:#f1f1f1;border-bottom:1px solid #c9c9c9"></div>
<div class="abs" style="left:1270px;top:562px;width:323px;height:36px;background:#f1f1f1;border-top:1px solid #cfcfcf"></div>
<svg class="abs" style="left:1266px;top:277px" width="327" height="290">
 <path d="M5.5,8 V17.5 M7.5,9 V16.5" stroke="#666" stroke-width="0.9"/>
 <circle cx="19.4" cy="11.3" r="4.6" fill="#222"/><path d="M17,11.3 H21.8" stroke="#fff" stroke-width="1.4"/>
 <path d="M311.5,8 L315.5,11 L311.5,14 Z M316,8 L320,11 L316,14 Z" fill="#222"/>
 <rect x="317" y="28" width="6" height="144" rx="3" fill="#a9a9a9"/>
 <rect x="317.5" y="172" width="5" height="110" fill="#c8c8c8"/>
 <circle cx="25" cy="46" r="9" fill="#ee8a14"/>
 <circle cx="25" cy="129.9" r="9" fill="#ee8a14"/>
 <!-- dropdowns -->
 <rect x="132" y="61" width="150" height="16" fill="#e3e3e3"/>
 <rect x="266" y="61" width="16" height="16" fill="#e9e9e9"/>
 <path d="M266,77 V61 H282" fill="none" stroke="#fff" stroke-width="1"/><path d="M266,76.5 H281.5 V61" fill="none" stroke="#6a6a6a" stroke-width="1"/>
 <path d="M270.5,67 H277.5 L274,71 Z" fill="#000"/>
 <rect x="132" y="163.3" width="150" height="15.5" fill="#e3e3e3"/>
 <rect x="266" y="163.3" width="16" height="15.5" fill="#e9e9e9"/>
 <path d="M266,178.8 V163.3 H282" fill="none" stroke="#fff" stroke-width="1"/><path d="M266,178.3 H281.5 V163.3" fill="none" stroke="#6a6a6a" stroke-width="1"/>
 <path d="M270.5,169 H277.5 L274,173 Z" fill="#000"/>
 <!-- mouse icon -->
 <defs><linearGradient id="gMouse" x1="0" y1="0" x2="0" y2="1"><stop offset="0" stop-color="#f4f5f8"/><stop offset="0.45" stop-color="#e8eaef"/><stop offset="1" stop-color="#9aa1ad"/></linearGradient></defs>
 <path d="M279.6,228.2 V248.5 Q279.6,252 283,252 H279.6" fill="none"/>
 <rect x="271.2" y="227.5" width="16.8" height="24" rx="8.4" fill="url(#gMouse)" stroke="#444" stroke-width="1"/>
 <path d="M271.5,237.5 H287.7 M279.6,227.5 V237.5" stroke="#555" stroke-width="0.8"/>
 <rect x="277.4" y="230.5" width="4.4" height="7" rx="2" fill="#4aa0f0" stroke="#2a5fa8" stroke-width="0.6"/>
 <path d="M279.6,227.5 V224.5 Q279.6,222.5 282,222.5 H288 Q290,222.5 290,220 V218" fill="none" stroke="#444" stroke-width="0.9"/>
 <path d="M15,259.3 H303" stroke="#8a8a8a" stroke-width="1"/>
 <path d="M264.5,283 V277 M262.7,279 L264.5,276.5 L266.3,279" fill="none" stroke="#333" stroke-width="0.9"/>
 <path d="M271.2,286 V283.5 A8.4,8.4 0 0 1 288,283.5 V286" fill="url(#gMouse)" stroke="#444" stroke-width="1"/>
 <rect x="277.4" y="279.5" width="4.4" height="7" rx="2" fill="#4aa0f0" stroke="#2a5fa8" stroke-width="0.6"/>
 <path d="M279.6,275 V273.5 Q279.6,271.5 282,271.5 H288 Q290,271.5 290,269 V267" fill="none" stroke="#444" stroke-width="0.9"/>
</svg>
<div class="abs" style="left:1294px;top:282px;font-size:10px;color:#555;line-height:12px;transform:scaleY(1.08);transform-origin:0 0">GETTING STARTED</div>
<div class="abs" style="left:1286.5px;top:314.5px;font-size:12px;font-weight:bold;color:#fff;line-height:14px">1</div>
<div class="abs" style="left:1286.5px;top:399px;font-size:12px;font-weight:bold;color:#fff;line-height:14px">2</div>
<div class="abs gs" style="left:1306.5px;top:314px;font-weight:bold;letter-spacing:0.1px">SETUP</div>
<div class="abs gs" style="left:1306.8px;top:398px;font-weight:bold;letter-spacing:0.37px">NAVIGATE &amp; VIEW</div>
<div class="abs gs" style="left:1282.5px;top:338px;font-size:12px;transform:scaleY(1.1);transform-origin:0 0">Default Units</div>
<div class="abs gs" style="left:1415.7px;top:338px">mm</div>
<div class="abs gs" style="left:1282.5px;top:359px">New documents will use <b>mm</b> as their default unit.</div>
<div class="abs gs" style="left:1282.5px;top:419.5px">Maneuver your model using familiar controls.</div>
<div class="abs gs" style="left:1282.5px;top:439px;font-size:12.4px;transform:scaleY(1.06);transform-origin:0 0">CAD Experience</div>
<div class="abs gs" style="left:1415.4px;top:439px">New to CAD</div>
<div class="abs gs" style="left:1530.8px;top:478.5px;font-size:12.5px">Mouse</div>
<div class="abs gs" style="left:1282.5px;top:505px">Pan</div>
<div class="abs" style="left:1270px;top:552px;width:300px;height:7px;overflow:hidden"><div class="gs" style="position:absolute;left:12.5px;top:0px">Zoom</div></div>
<div class="abs" style="left:1522px;top:571px;width:60px;height:19px;background:#e7e7e7;border:1px solid #c6c6c6"></div>
<div class="abs" style="left:1535.5px;top:574px;font-size:12.5px;color:#666;line-height:15px">Close</div>


<!-- nav bar -->
<div class="abs" style="left:675.5px;top:752px;width:244.5px;height:23.5px;background:#f1f1f1"></div>
<svg class="abs" style="left:670px;top:750px" width="260" height="28">
 <defs><linearGradient id="gLens" x1="0" y1="0" x2="1" y2="1"><stop offset="0" stop-color="#f8fbfc"/><stop offset="1" stop-color="#b9cfd6"/></linearGradient>
 <linearGradient id="gMon" x1="0" y1="0" x2="0" y2="1"><stop offset="0" stop-color="#b8cdef"/><stop offset="1" stop-color="#7d9fd8"/></linearGradient></defs>
 <!-- orbit -->
 <path d="M16.6,21.5 V8.5 M14,11.5 L16.6,6.5 L19.2,11.5" fill="none" stroke="#333" stroke-width="1.1"/>
 <path d="M16.6,8.5 v13" stroke="#fff" stroke-width="0.1"/>
 <rect x="15.2" y="9" width="2.8" height="12.5" fill="#fff" stroke="#333" stroke-width="0.9"/>
 <path d="M9,16 C13,13 22,12.5 24,15 C25.5,17.5 18,19.5 12,18.5" fill="none" stroke="#333" stroke-width="1.4"/>
 <path d="M8.5,18.5 L12.5,16 V21 Z" fill="#333"/>
 <path d="M29.3,12.2 H35 L32.15,15.5 Z" fill="#333"/>
 <!-- look at -->
 <path d="M41.5,21.5 V11 L45.5,7 V10 L49.5,7.5 L51,9 L53.5,7 L55,8.5 V11 H57 V21.5 Z" fill="#f2f2f2" stroke="#333" stroke-width="1"/>
 <path d="M41.5,11 H57" stroke="#333" stroke-width="1"/>
 <rect x="44.3" y="13.5" width="10.2" height="4.6" fill="#a9b0bb" stroke="#333" stroke-width="0.9"/>
 <!-- pan hand -->
 <path d="M71.2,16.3 L68.5,13.5 Q67,12.5 66.5,14 L71,20 Q73,22.5 76.5,22.5 H78.5 Q82.5,22 82.5,17 V11.5 Q82.5,10 81.3,10 Q80,10 80,11.5 V9 Q80,7.5 78.7,7.5 Q77.5,7.5 77.5,9 V7.5 Q77.5,6.2 76.2,6.2 Q75,6.2 75,7.5 V8.5 Q75,7.3 73.8,7.3 Q72.5,7.3 72.5,8.5 Z" fill="#f4f4f4" stroke="#333" stroke-width="1"/>
 <path d="M75,8.5 V14 M77.5,9 V14 M80,11.5 V14.5" stroke="#333" stroke-width="0.8"/>
 <!-- zoom +- -->
 <circle cx="96.8" cy="13.7" r="4.4" fill="url(#gLens)" stroke="#333" stroke-width="1.3"/>
 <path d="M100,17 L103.2,20.3" stroke="#333" stroke-width="2.4" stroke-linecap="round"/>
 <path d="M104.5,9 H109 M106.75,6.8 V11.2 M104.5,12.3 H109" stroke="#333" stroke-width="0.9"/>
 <!-- fit -->
 <rect x="119.2" y="6.4" width="15.6" height="15.2" fill="none" stroke="#333" stroke-width="0.8" stroke-dasharray="1.6 1.4"/>
 <circle cx="125.4" cy="12.2" r="5.6" fill="url(#gLens)" stroke="#333" stroke-width="1.3"/>
 <path d="M129.6,16.4 L133.8,20.4" stroke="#333" stroke-width="2.4" stroke-linecap="round"/>
 <path d="M140,12.2 H146 L143,15.5 Z" fill="#333"/>
 <!-- monitor -->
 <defs><linearGradient id="gGridI" x1="0" y1="0" x2="0" y2="1"><stop offset="0" stop-color="#b0b0b0"/><stop offset="1" stop-color="#5a5f68"/></linearGradient></defs>
 <rect x="160.3" y="6.2" width="15.4" height="12.6" rx="1.5" fill="#f6f6f6" stroke="#333" stroke-width="1"/>
 <rect x="162.4" y="8.2" width="11.3" height="8.3" rx="1" fill="#a7c1e3" stroke="#2b3f66" stroke-width="1.1"/>
 <path d="M164.5,19 L164.2,20.5 Q164.2,21.6 165.5,21.6 H170.5 Q171.8,21.6 171.8,20.5 L171.5,19" fill="#fff" stroke="#333" stroke-width="0.9"/>
 <path d="M178.4,12.2 H183.7 L181.05,15.5 Z" fill="#333"/>
 <!-- grid -->
 <rect x="191.2" y="6.2" width="15.5" height="15.5" rx="1.2" fill="url(#gGridI)" stroke="#333" stroke-width="0.8"/>
 <rect x="192.40" y="7.40" width="1.9" height="1.9" fill="#fff"/><rect x="192.40" y="10.30" width="1.9" height="1.9" fill="#fff"/><rect x="192.40" y="13.20" width="1.9" height="1.9" fill="#fff"/><rect x="192.40" y="16.10" width="1.9" height="1.9" fill="#fff"/><rect x="192.40" y="19.00" width="1.9" height="1.9" fill="#fff"/><rect x="195.30" y="7.40" width="1.9" height="1.9" fill="#fff"/><rect x="195.30" y="10.30" width="1.9" height="1.9" fill="#fff"/><rect x="195.30" y="13.20" width="1.9" height="1.9" fill="#fff"/><rect x="195.30" y="16.10" width="1.9" height="1.9" fill="#fff"/><rect x="195.30" y="19.00" width="1.9" height="1.9" fill="#fff"/><rect x="198.20" y="7.40" width="1.9" height="1.9" fill="#fff"/><rect x="198.20" y="10.30" width="1.9" height="1.9" fill="#fff"/><rect x="198.20" y="13.20" width="1.9" height="1.9" fill="#fff"/><rect x="198.20" y="16.10" width="1.9" height="1.9" fill="#fff"/><rect x="198.20" y="19.00" width="1.9" height="1.9" fill="#fff"/><rect x="201.10" y="7.40" width="1.9" height="1.9" fill="#fff"/><rect x="201.10" y="10.30" width="1.9" height="1.9" fill="#fff"/><rect x="201.10" y="13.20" width="1.9" height="1.9" fill="#fff"/><rect x="201.10" y="16.10" width="1.9" height="1.9" fill="#fff"/><rect x="201.10" y="19.00" width="1.9" height="1.9" fill="#fff"/><rect x="204.00" y="7.40" width="1.9" height="1.9" fill="#fff"/><rect x="204.00" y="10.30" width="1.9" height="1.9" fill="#fff"/><rect x="204.00" y="13.20" width="1.9" height="1.9" fill="#fff"/><rect x="204.00" y="16.10" width="1.9" height="1.9" fill="#fff"/><rect x="204.00" y="19.00" width="1.9" height="1.9" fill="#fff"/>
 <path d="M209.7,12.2 H215 L212.35,15.5 Z" fill="#333"/>
 <!-- viewports -->
 <rect x="222" y="7" width="14.8" height="12.8" rx="1.6" fill="#2d4a80"/>
 <g fill="#a3bfe6"><rect x="223.2" y="8.2" width="5.7" height="4.9"/><rect x="229.9" y="8.2" width="5.7" height="4.9"/><rect x="223.2" y="13.9" width="5.7" height="4.7"/><rect x="229.9" y="13.9" width="5.7" height="4.7"/></g>
 <g fill="#7e9fd0"><rect x="224.9" y="9.9" width="2.3" height="1.5"/><rect x="231.6" y="9.9" width="2.3" height="1.5"/><rect x="224.9" y="15.5" width="2.3" height="1.5"/><rect x="231.6" y="15.5" width="2.3" height="1.5"/></g>
 <path d="M240.5,12.2 H245.8 L243.15,15.5 Z" fill="#333"/>
</svg>
<!-- comments -->
<div class="abs" style="left:2px;top:751px;width:300px;height:25px;background:#f1f1f1;border:1px solid #c9c9c9;border-top-color:#f1f1f1"></div>
<svg class="abs" style="left:270px;top:751px" width="40" height="25">
 <circle cx="15.4" cy="12.4" r="4.6" fill="#222"/><path d="M12.9,12.4 H17.9 M15.4,9.9 V14.9" stroke="#fff" stroke-width="1.4"/>
 <path d="M27.5,8 V17.5 M29.5,9 V16.5" stroke="#777" stroke-width="0.9"/>
</svg>
<div class="abs" style="left:27.5px;top:756px;font-size:10px;color:#555;line-height:14px;transform:scaleY(1.08);transform-origin:0 0">COMMENTS</div>
<div id="timeline" class="abs"></div>
<svg class="abs" style="left:0;top:788px" width="160" height="42">
 <g fill="#505050">
  <rect x="9" y="11.5" width="2.2" height="14"/><path d="M21,11.5 V25.5 L11.5,18.5 Z"/>
  <path d="M33.5,18.5 L42,11.8 V25.2 Z"/><rect x="43.5" y="15.5" width="2.2" height="6"/>
  <path d="M58.8,11 L71.5,18.5 L58.8,26 Z"/>
  <rect x="82.8" y="15.5" width="2.2" height="6"/><path d="M86.5,11.8 L95,18.5 L86.5,25.2 Z"/>
  <path d="M109,11.5 L118.5,18.5 L109,25.5 Z"/><rect x="118.8" y="11.5" width="2.2" height="14"/>
  <path d="M134,3.3 H146 V6.5 L141,11.8 V34.5 H139 V11.8 L134,6.5 Z" fill="#606060"/>
 </g>
</svg>
<svg class="abs" style="left:1568px;top:793px" width="26" height="26">
 <g transform="translate(13,13)">
  <g fill="#555">
   <rect x="-2" y="-8.3" width="4" height="16.6" rx="1.6"/>
   <rect x="-2" y="-8.3" width="4" height="16.6" rx="1.6" transform="rotate(45)"/>
   <rect x="-2" y="-8.3" width="4" height="16.6" rx="1.6" transform="rotate(90)"/>
   <rect x="-2" y="-8.3" width="4" height="16.6" rx="1.6" transform="rotate(135)"/>
  </g>
  <circle r="6" fill="#555"/>
  <circle r="3.8" fill="#f1f1f1"/>
  <circle r="2.2" fill="#555"/>
 </g>
</svg>
</body></html>
